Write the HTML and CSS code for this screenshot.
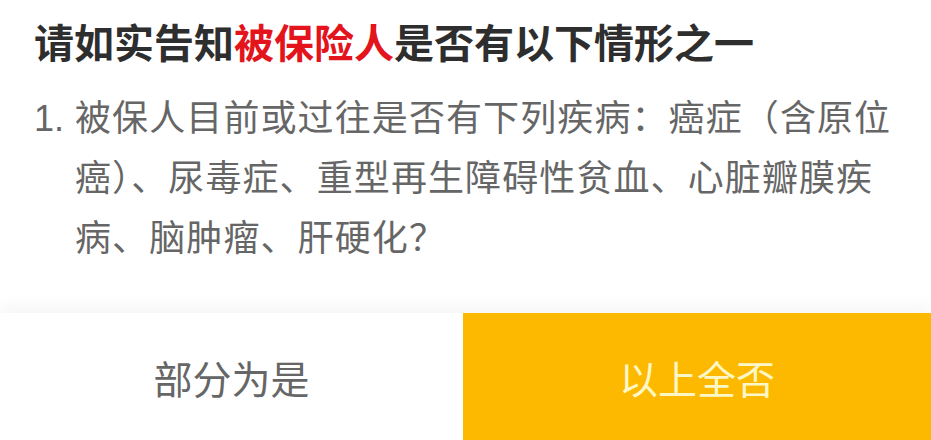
FILE: index.html
```html
<!DOCTYPE html>
<html lang="zh-CN">
<head>
<meta charset="utf-8">
<title>健康告知</title>
<link rel="stylesheet" href="styles.css">
</head>
<body>
<div class="sheet">
  <main class="notice">
    <h1 class="notice-title">请如实告知<span class="hl">被保险人</span>是否有以下情形之一</h1>
    <ol class="questions">
      <li class="question">
        <span class="q-num">1.</span>
        <span class="q-text">被保人目前或过往是否有下列疾病：癌症（含原位癌）、尿毒症、重型再生障碍性贫血、心脏瓣膜疾病、脑肿瘤、肝硬化？</span>
      </li>
    </ol>
  </main>
  <footer class="actions">
    <button class="btn btn-partial" type="button">部分为是</button>
    <button class="btn btn-none" type="button">以上全否</button>
  </footer>
</div>
</body>
</html>
```
FILE: styles.css
```css
* {
  box-sizing: border-box;
}

html, body {
  margin: 0;
  padding: 0;
  background: #ffffff;
}

body {
  font-family: "Liberation Sans", "Noto Sans CJK SC", sans-serif;
}

.sheet {
  width: 931px;
  height: 440px;
  display: flex;
  flex-direction: column;
  overflow: hidden;
}

.notice {
  flex: 1;
  padding: 13px 0 0 34px;
}

.notice-title {
  margin: 0;
  font-family: "Noto Sans CJK SC", sans-serif;
  font-weight: 700;
  font-size: 40px;
  line-height: 56px;
  color: #2e2e2e;
  white-space: nowrap;
}

.notice-title .hl {
  color: #e3141c;
}

.questions {
  list-style: none;
  margin: 20px 0 0;
  padding: 0;
}

.question {
  display: flex;
  font-size: 36px;
  line-height: 60px;
  color: #666666;
}

.q-num {
  flex: 0 0 41px;
}

.q-text {
  width: 830px;
  letter-spacing: 1.1px;
}

.actions {
  flex: 0 0 127px;
  display: grid;
  grid-template-columns: 463px 1fr;
  box-shadow: 0 -8px 14px rgba(0, 0, 0, 0.035);
  position: relative;
}

.btn {
  border: 0;
  margin: 0;
  padding: 0;
  font-family: "Noto Sans CJK SC", sans-serif;
  font-size: 39px;
  font-weight: 400;
  cursor: pointer;
}

.btn-partial {
  background: #ffffff;
  color: #666666;
}

.btn-none {
  background: #fcb900;
  color: #fdf7c6;
}
```
